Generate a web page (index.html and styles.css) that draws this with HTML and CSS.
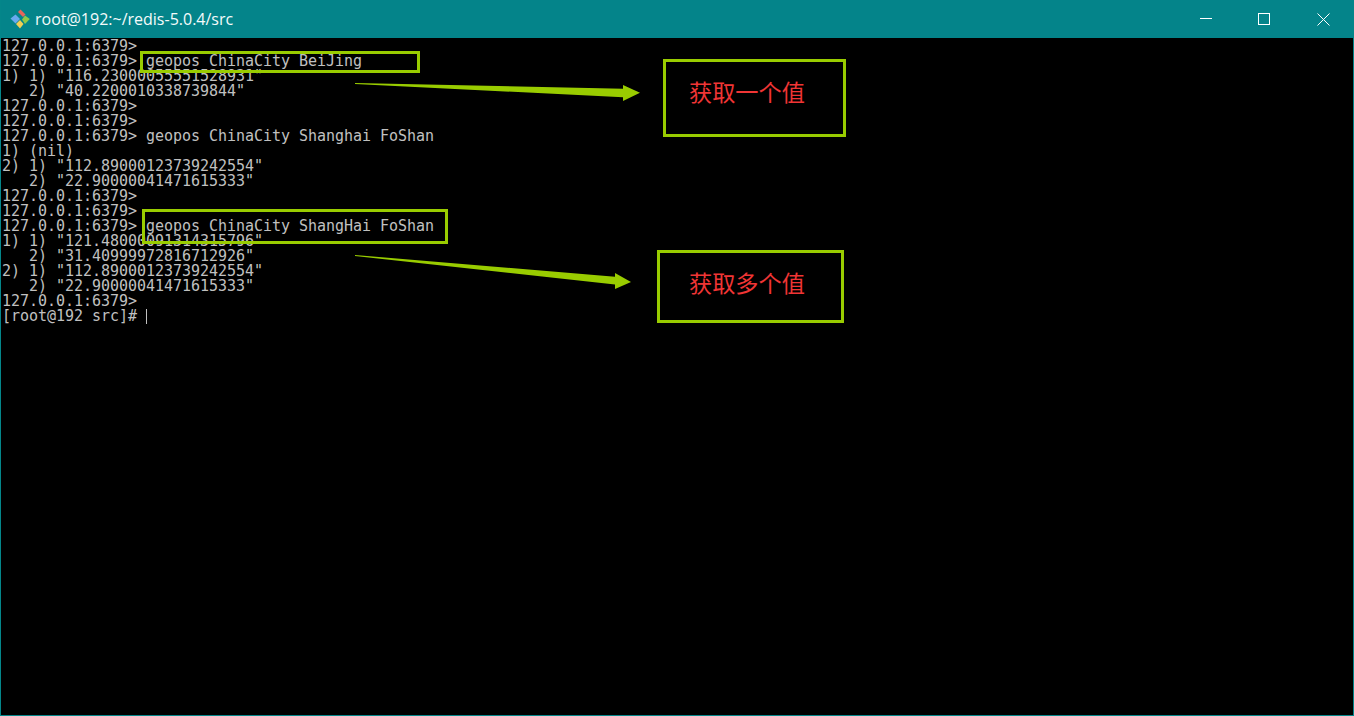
FILE: index.html
```html
<!DOCTYPE html>
<html lang="zh">
<head>
<meta charset="utf-8">
<title>root@192:~/redis-5.0.4/src</title>
<link rel="stylesheet" href="styles.css">
</head>
<body>
<div class="window">
  <header class="titlebar">
    <svg class="app-icon" width="20" height="20" viewBox="0 0 20 20">
      <path d="M8 3 L10.5 0.5 L15.5 5.5 L13 8 Z" fill="#e8655a"/>
      <path d="M5.5 5.5 L10 10 L5.5 14.5 L0.5 9.5 Z" fill="#6aa9ef"/>
      <path d="M15 6.5 L19.8 10 L15 15 L12 10.5 Z" fill="#8fc94a"/>
      <path d="M10 11 L13.5 15 L10 19.5 L6 15 Z" fill="#f2cf55"/>
    </svg>
    <span class="title">root@192:~/redis-5.0.4/src</span>
    <div class="controls">
      <span class="control"><svg width="13" height="14" viewBox="0 0 13 14"><path d="M1 6.5H13" stroke="#fff" fill="none"/></svg></span>
      <span class="control"><svg width="13" height="14" viewBox="0 0 13 14"><rect x="0.5" y="1.5" width="11" height="11" stroke="#fff" fill="none"/></svg></span>
      <span class="control"><svg width="13" height="14" viewBox="0 0 13 14"><path d="M0.5 1.5L12.5 13.5M12.5 1.5L0.5 13.5" stroke="#fff" fill="none"/></svg></span>
    </div>
  </header>
  <main class="terminal">
<pre class="output">127.0.0.1:6379&gt;
127.0.0.1:6379&gt; geopos ChinaCity BeiJing
1) 1) "116.23000055551528931"
   2) "40.2200010338739844"
127.0.0.1:6379&gt;
127.0.0.1:6379&gt;
127.0.0.1:6379&gt; geopos ChinaCity Shanghai FoShan
1) (nil)
2) 1) "112.89000123739242554"
   2) "22.90000041471615333"
127.0.0.1:6379&gt;
127.0.0.1:6379&gt;
127.0.0.1:6379&gt; geopos ChinaCity ShangHai FoShan
1) 1) "121.48000091314315796"
   2) "31.40999972816712926"
2) 1) "112.89000123739242554"
   2) "22.90000041471615333"
127.0.0.1:6379&gt;
[root@192 src]# <span class="cursor"></span></pre>
    <div class="mark mark-cmd-one"></div>
    <div class="mark mark-cmd-many"></div>
    <div class="mark note note-one">获取一个值</div>
    <div class="mark note note-many">获取多个值</div>
    <svg class="arrows" width="1354" height="678" viewBox="0 38 1354 678">
      <path d="M355 83 L623 88.7 L623 85 L640 92.7 L623 101 L623 97.3 L355 84 Z" fill="#99cc00"/>
      <path d="M355 255 L615 276.7 L615 273 L631 282 L615 289 L615 284.5 L355 256 Z" fill="#99cc00"/>
    </svg>
  </main>
</div>
</body>
</html>
```

FILE: styles.css
```css
html, body {
  margin: 0;
  padding: 0;
  height: 100%;
  overflow: hidden;
  background: #000;
}

.window {
  height: 716px;
  display: flex;
  flex-direction: column;
  box-sizing: border-box;
  border: 1px solid #04868a;
  border-top: 0;
}

.titlebar {
  height: 38px;
  flex: none;
  display: flex;
  align-items: center;
  background: #04848a;
  color: #fff;
  padding-left: 9px;
}

.app-icon {
  flex: none;
}

.title {
  margin-left: 5px;
  font: 16px/20px "Open Sans", "Noto Sans", sans-serif;
  color: #f4fbfb;
}

.controls {
  margin-left: auto;
  display: flex;
}

.control {
  width: 59px;
  height: 38px;
  display: flex;
  align-items: center;
  justify-content: center;
}

.terminal {
  flex: 1;
  position: relative;
  background: #000;
  overflow: hidden;
}

.output {
  margin: 0;
  padding: 1px 0 0 1px;
  font: 15px/15px "DejaVu Sans Mono", "Liberation Mono", monospace;
  letter-spacing: -0.03px;
  color: #c0c0c0;
}

.cursor {
  display: inline-block;
  width: 1px;
  height: 15px;
  background: #c0c0c0;
  vertical-align: -3px;
}

.mark {
  position: absolute;
  box-sizing: border-box;
  border: 3px solid #99cc00;
}

.mark-cmd-one {
  left: 139px;
  top: 13px;
  width: 280px;
  height: 22px;
}

.mark-cmd-many {
  left: 141px;
  top: 171px;
  width: 306px;
  height: 35px;
}

.note {
  display: flex;
  align-items: center;
  font: 23.2px/30px "Noto Sans CJK SC", sans-serif;
  color: #f03535;
}

.note-one {
  left: 662px;
  top: 21px;
  width: 183px;
  height: 78px;
  padding: 0 0 14px 23px;
}

.note-many {
  left: 656px;
  top: 212px;
  width: 187px;
  height: 73px;
  padding: 0 0 10px 29px;
}

.arrows {
  position: absolute;
  left: -1px;
  top: 0;
}
```
